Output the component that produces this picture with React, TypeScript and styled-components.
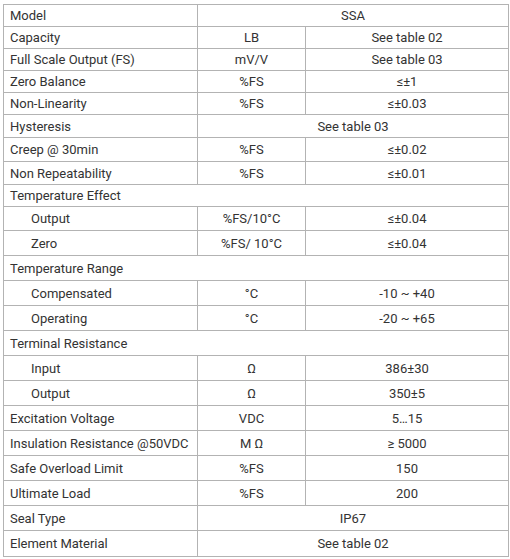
import React, { FC } from 'react';
import styled, { createGlobalStyle } from 'styled-components';

const GlobalStyle = createGlobalStyle`
  html, body {
    margin: 0;
    padding: 0;
    background: #fff;
  }
  body {
    font-family: Roboto, "Liberation Sans", Arial, sans-serif;
  }
`

const PageStyle = styled.div`
  padding: 4px 3px 0 3px;
`

const TableStyle = styled.table`
  border-collapse: collapse;
  table-layout: fixed;
  width: 505px;
  font-size: 13px;
  color: #333;

  & td {
    border: 1px solid #b3b3b3;
    padding: 0;
    white-space: nowrap;
  }
`

const RowStyle = styled.tr<{ $h: number }>`
  height: ${p => p.$h}px;
`

const LabelCell = styled.td<{ $sub?: boolean }>`
  text-align: left;
  padding-left: ${p => (p.$sub ? '27px' : '6px')} !important;
`

const CenterCell = styled.td`
  text-align: center;
`

interface Spec {
  label: string
  unit?: string
  value?: string
  sub?: boolean
  h: number
}

// unit undefined + value -> value spans two columns
// unit and value undefined -> label spans whole row
const specs: Spec[] = [
  { label: 'Model', value: 'SSA', h: 22 },
  { label: 'Capacity', unit: 'LB', value: 'See table 02', h: 22 },
  { label: 'Full Scale Output (FS)', unit: 'mV/V', value: 'See table 03', h: 22 },
  { label: 'Zero Balance', unit: '%FS', value: '≤±1', h: 22 },
  { label: 'Non-Linearity', unit: '%FS', value: '≤±0.03', h: 22 },
  { label: 'Hysteresis', value: 'See table 03', h: 23 },
  { label: 'Creep @ 30min', unit: '%FS', value: '≤±0.02', h: 24 },
  { label: 'Non Repeatability', unit: '%FS', value: '≤±0.01', h: 23 },
  { label: 'Temperature Effect', h: 22 },
  { label: 'Output', unit: '%FS/10°C', value: '≤±0.04', sub: true, h: 24 },
  { label: 'Zero', unit: '%FS/ 10°C', value: '≤±0.04', sub: true, h: 25 },
  { label: 'Temperature Range', h: 25 },
  { label: 'Compensated', unit: '°C', value: '-10 ~ +40', sub: true, h: 25 },
  { label: 'Operating', unit: '°C', value: '-20 ~ +65', sub: true, h: 25 },
  { label: 'Terminal Resistance', h: 25 },
  { label: 'Input', unit: 'Ω', value: '386±30', sub: true, h: 25 },
  { label: 'Output', unit: 'Ω', value: '350±5', sub: true, h: 25 },
  { label: 'Excitation Voltage', unit: 'VDC', value: '5…15', h: 25 },
  { label: 'Insulation Resistance @50VDC', unit: 'M Ω', value: '≥ 5000', h: 25 },
  { label: 'Safe Overload Limit', unit: '%FS', value: '150', h: 25 },
  { label: 'Ultimate Load', unit: '%FS', value: '200', h: 25 },
  { label: 'Seal Type', value: 'IP67', h: 25 },
  { label: 'Element Material', value: 'See table 02', h: 26 },
]

const SpecRow: FC<{ spec: Spec }> = ({ spec }) => {
  if (spec.unit === undefined && spec.value === undefined) {
    return <RowStyle $h={spec.h}>
      <LabelCell colSpan={3}>{spec.label}</LabelCell>
    </RowStyle>
  }
  return <RowStyle $h={spec.h}>
    <LabelCell $sub={spec.sub}>{spec.label}</LabelCell>
    {spec.unit === undefined
      ? <CenterCell colSpan={2}>{spec.value}</CenterCell>
      : <>
        <CenterCell>{spec.unit}</CenterCell>
        <CenterCell>{spec.value}</CenterCell>
      </>}
  </RowStyle>
}

const App: FC = () => {
  return <PageStyle>
    <GlobalStyle />
    <TableStyle>
      <colgroup>
        <col style={{ width: 194 }} />
        <col style={{ width: 108 }} />
        <col style={{ width: 203 }} />
      </colgroup>
      <tbody>
        {specs.map((s, i) => <SpecRow key={i} spec={s} />)}
      </tbody>
    </TableStyle>
  </PageStyle>
}

export default App
